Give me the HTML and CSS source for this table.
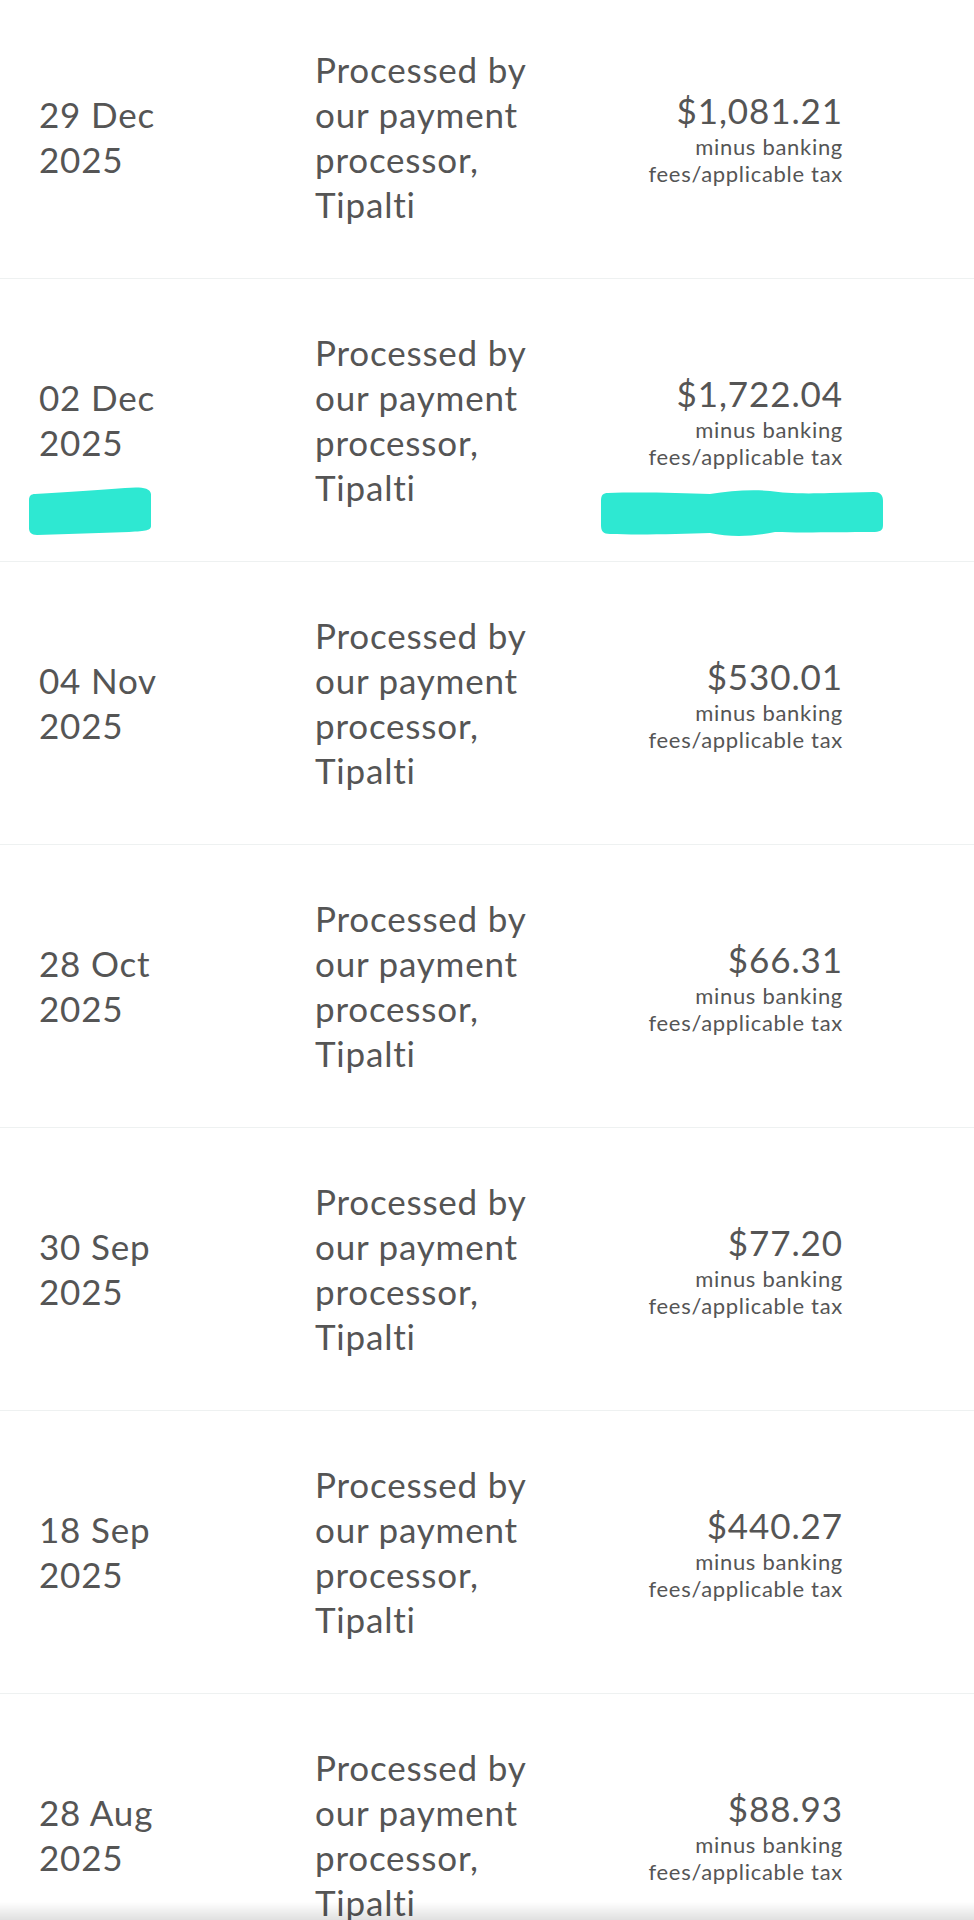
FILE: index.html
```html
<!DOCTYPE html>
<html lang="en">
<head>
  <meta charset="UTF-8" />
  <meta name="viewport" content="width=device-width, initial-scale=1" />
  <title>Payments</title>
  <link rel="stylesheet" href="styles.css">
</head>
<body>
  <div class="payments">
    <div class="payment-row">
      <div class="pay-date">29 Dec 2025</div>
      <div class="pay-desc">Processed by our payment processor, Tipalti</div>
      <div class="pay-amount">
        <div class="amount">$1,081.21</div>
        <div class="amount-note">minus banking<br>fees/applicable tax</div>
      </div>
    </div>

    <div class="payment-row">
      <div class="pay-date">02 Dec 2025</div>
      <div class="pay-desc">Processed by our payment processor, Tipalti</div>
      <div class="pay-amount">
        <div class="amount">$1,722.04</div>
        <div class="amount-note">minus banking<br>fees/applicable tax</div>
      </div>
      <!-- marker scribbles drawn over the screenshot -->
      <svg class="scribble scribble-left" width="124" height="50" viewBox="0 0 124 50">
        <path d="M6 8 C40 6 70 4 96 2 C110 1 121 1 122 8 L122 40 C122 44 118 45 100 46 C70 47 40 48 8 49 C2 49 0 46 0 42 L0 14 C0 10 2 8 6 8 Z" fill="#2ee8d2"/>
      </svg>
      <svg class="scribble scribble-right" width="284" height="48" viewBox="0 0 284 48">
        <path d="M8 4 C40 3 80 4 110 5 C130 2 150 0 170 2 C185 4 200 5 230 4 L274 3 C280 3 283 6 283 12 L283 36 C283 42 280 43 272 43 C240 43 200 44 175 43 C150 48 130 48 110 44 C80 45 40 46 10 45 C3 45 1 42 1 36 L1 12 C1 6 3 4 8 4 Z" fill="#2ee8d2"/>
      </svg>
    </div>

    <div class="payment-row">
      <div class="pay-date">04 Nov 2025</div>
      <div class="pay-desc">Processed by our payment processor, Tipalti</div>
      <div class="pay-amount">
        <div class="amount">$530.01</div>
        <div class="amount-note">minus banking<br>fees/applicable tax</div>
      </div>
    </div>

    <div class="payment-row">
      <div class="pay-date">28 Oct 2025</div>
      <div class="pay-desc">Processed by our payment processor, Tipalti</div>
      <div class="pay-amount">
        <div class="amount">$66.31</div>
        <div class="amount-note">minus banking<br>fees/applicable tax</div>
      </div>
    </div>

    <div class="payment-row">
      <div class="pay-date">30 Sep 2025</div>
      <div class="pay-desc">Processed by our payment processor, Tipalti</div>
      <div class="pay-amount">
        <div class="amount">$77.20</div>
        <div class="amount-note">minus banking<br>fees/applicable tax</div>
      </div>
    </div>

    <div class="payment-row">
      <div class="pay-date">18 Sep 2025</div>
      <div class="pay-desc">Processed by our payment processor, Tipalti</div>
      <div class="pay-amount">
        <div class="amount">$440.27</div>
        <div class="amount-note">minus banking<br>fees/applicable tax</div>
      </div>
    </div>

    <div class="payment-row">
      <div class="pay-date">28 Aug 2025</div>
      <div class="pay-desc">Processed by our payment processor, Tipalti</div>
      <div class="pay-amount">
        <div class="amount">$88.93</div>
        <div class="amount-note">minus banking<br>fees/applicable tax</div>
      </div>
    </div>
  </div>

  <div class="bottom-fade"></div>
</body>
</html>
```

FILE: styles.css
```css
html,
body {
  margin: 0;
  padding: 0;
  background: #fff;
  overflow: hidden;
}

body {
  font-family: Lato, 'Open Sans', sans-serif;
  color: #555;
}

.payments {
  margin-top: -4px;
}

.payment-row {
  position: relative;
  display: grid;
  grid-template-columns: 276px 240px 1fr;
  align-items: center;
  height: 282px;
  padding: 0 131px 0 39px;
  border-bottom: 1px solid #eef1f1;
}

.pay-date {
  max-width: 134px;
  font-size: 35px;
  line-height: 45px;
  letter-spacing: 0.8px;
}

.pay-desc {
  font-size: 35px;
  line-height: 45px;
  letter-spacing: 0.8px;
}

.pay-amount {
  text-align: right;
}

.amount {
  font-size: 35px;
  line-height: 45px;
  letter-spacing: 0.9px;
}

.amount-note {
  font-size: 22px;
  line-height: 27px;
  letter-spacing: 0.7px;
}

.scribble {
  position: absolute;
}

.scribble-left {
  left: 29px;
  top: 207px;
}

.scribble-right {
  left: 600px;
  top: 210px;
}

.bottom-fade {
  position: fixed;
  left: 0;
  right: 0;
  bottom: 0;
  height: 18px;
  background: linear-gradient(to bottom, rgba(0, 0, 0, 0), rgba(0, 0, 0, 0.12));
}
```
